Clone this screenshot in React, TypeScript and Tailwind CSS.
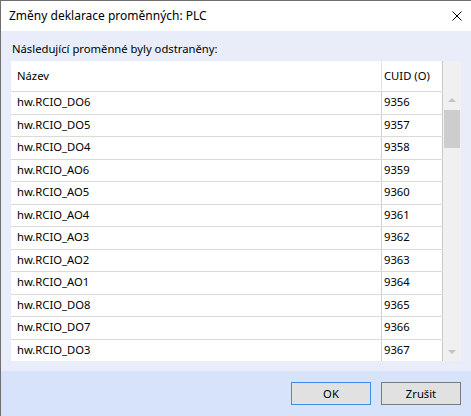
import React from "react";

const rows: [string, string][] = [
  ["hw.RCIO_DO6", "9356"],
  ["hw.RCIO_DO5", "9357"],
  ["hw.RCIO_DO4", "9358"],
  ["hw.RCIO_AO6", "9359"],
  ["hw.RCIO_AO5", "9360"],
  ["hw.RCIO_AO4", "9361"],
  ["hw.RCIO_AO3", "9362"],
  ["hw.RCIO_AO2", "9363"],
  ["hw.RCIO_AO1", "9364"],
  ["hw.RCIO_DO8", "9365"],
  ["hw.RCIO_DO7", "9366"],
  ["hw.RCIO_DO3", "9367"],
];

export default function App() {
  return (
    <div
      className="w-[471px] h-[416px] flex flex-col border-l border-t border-[#6f6f6f] text-[11.25px] text-black overflow-hidden"
      style={{ fontFamily: '"Noto Sans", "Open Sans", sans-serif' }}
    >
      {/* Title bar */}
      <div className="h-[30px] shrink-0 bg-white flex items-center justify-between pl-2 pr-[9px]">
        <span className="text-[12px] leading-[16px]">Změny deklarace proměnných: PLC</span>
        <svg width="10" height="10" viewBox="0 0 10 10">
          <path d="M0.5 0.5 L9.5 9.5 M9.5 0.5 L0.5 9.5" stroke="#000" strokeWidth="1" />
        </svg>
      </div>

      {/* Body */}
      <div className="h-[340px] shrink-0 bg-[#e9edf9] px-[10px] py-[10px] flex flex-col">
        <div className="leading-[16px] pl-[1px]">Následující proměnné byly odstraněny:</div>
        <div className="mt-[4px] h-[300px] flex">
          <div className="flex-1 bg-white overflow-hidden flex flex-col">
            <div className="h-[31px] shrink-0 flex border-b border-[#dadada]">
              <div className="w-[370px] flex items-center pl-[6px]">Název</div>
              <div className="flex-1 flex items-center pl-[2px] border-l border-[#e3e3e3] border-r border-r-[#c8c8c8]">
                CUID (O)
              </div>
            </div>
            {rows.map(([name, id]) => (
              <div key={name} className="h-[22.5px] shrink-0 flex border-b border-[#dadada]">
                <div className="w-[370px] flex items-center pl-[6px]">{name}</div>
                <div className="flex-1 flex items-center pl-[2px] border-l border-[#d0d0d0] border-r border-r-[#c8c8c8]">
                  {id}
                </div>
              </div>
            ))}
          </div>
          {/* Scrollbar */}
          <div className="w-[18px] bg-[#f0f0f0] flex flex-col items-center">
            <div className="h-[49px] w-full flex items-end justify-center pb-[8px]">
              <svg width="8" height="4" viewBox="0 0 8 4">
                <path d="M0 4 L4 0 L8 4 Z" fill="#c2c2c2" />
              </svg>
            </div>
            <div className="w-[16px] h-[38px] bg-[#cdcdcd]" />
            <div className="flex-1" />
            <div className="h-[11px] w-full flex justify-center">
              <svg width="8" height="4" viewBox="0 0 8 4">
                <path d="M0 0 L8 0 L4 4 Z" fill="#c2c2c2" />
              </svg>
            </div>
          </div>
        </div>
      </div>

      {/* Footer */}
      <div className="flex-1 bg-[#d7e3f8] flex justify-end items-start pt-[11px] pr-[10px] gap-[10px]">
        <button className="w-[80px] h-[23px] bg-[#e1e1e1] border border-[#3d8ee8] leading-none">OK</button>
        <button className="w-[80px] h-[23px] bg-[#e1e1e1] border border-[#7a7a7a] leading-none">Zrušit</button>
      </div>
    </div>
  );
}
